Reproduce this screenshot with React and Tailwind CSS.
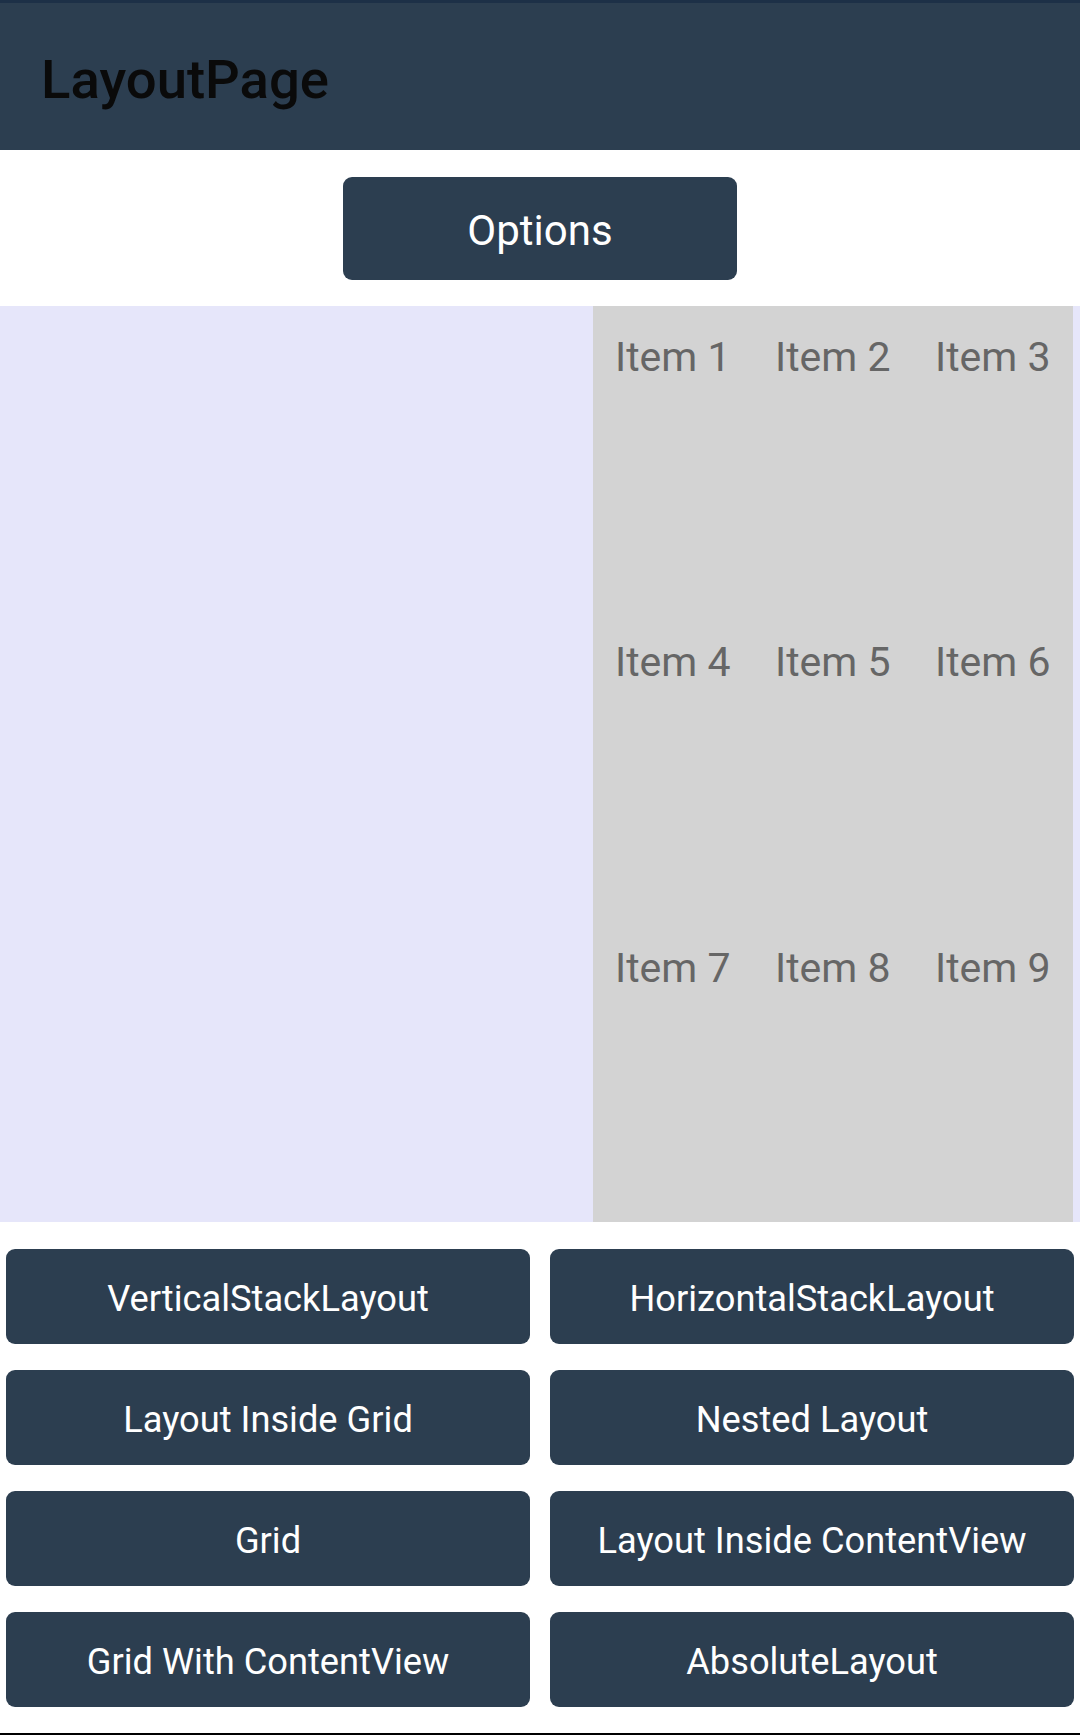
const gridItems = ['Item 1', 'Item 2', 'Item 3', 'Item 4', 'Item 5', 'Item 6', 'Item 7', 'Item 8', 'Item 9'];

const navButtons = [
  'VerticalStackLayout',
  'HorizontalStackLayout',
  'Layout Inside Grid',
  'Nested Layout',
  'Grid',
  'Layout Inside ContentView',
  'Grid With ContentView',
  'AbsoluteLayout',
];

export default function App() {
  return (
    <div className="w-[1080px] h-[1735px] bg-white flex flex-col font-['Roboto',sans-serif] overflow-hidden">
      <div className="h-[3px] bg-[#1d3047]" />

      {/* toolbar */}
      <div className="h-[147px] bg-[#2c3e50] flex items-center pl-[41px] pt-[5px]">
        <h1 className="text-[54.5px] font-medium text-[#0a0a0a] leading-none">LayoutPage</h1>
      </div>

      <div className="h-[156px] flex items-start justify-center pt-[27px]">
        <button className="w-[394px] h-[103px] rounded-[9px] bg-[#2c3e50] text-white text-[42px] leading-none pt-[4px]">
          Options
        </button>
      </div>

      {/* content area */}
      <div className="h-[916px] bg-[#e6e6fa] flex">
        <div className="flex-1" />
        <div className="w-[480px] bg-[#d3d3d3] grid grid-cols-3 grid-rows-3 mr-[7px]">
          {gridItems.map((item) => (
            <div key={item} className="pl-[22px] pt-[27px] text-[41px] leading-[49px] text-[#666666] whitespace-nowrap">
              {item}
            </div>
          ))}
        </div>
      </div>

      <div className="grid grid-cols-2 gap-x-[20px] gap-y-[26px] px-[6px] pt-[27px]">
        {navButtons.map((label) => (
          <button
            key={label}
            className="h-[95px] rounded-[9px] bg-[#2c3e50] text-white text-[36.25px] leading-none pt-[6px]"
          >
            {label}
          </button>
        ))}
      </div>

      <div className="flex-1" />
      <div className="h-[2px] bg-black" />
    </div>
  );
}
